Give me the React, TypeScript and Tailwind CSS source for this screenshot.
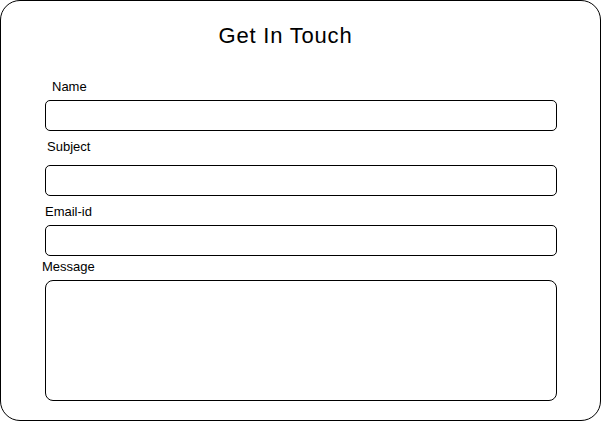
import React from "react";

export default function App() {
  const font = { fontFamily: '"Liberation Sans", Arial, Helvetica, sans-serif' };
  return (
    <div className="w-[601px] h-[421px] bg-white" style={font}>
      <div className="w-[601px] h-[421px] border border-black rounded-[20px] box-border flex flex-col pt-[23px] text-black">
        <div className="w-[569px] text-center text-[22px] leading-[24px] h-[24px] tracking-[0.8px]">Get In Touch</div>
        <div className="ml-[51px] mt-[31px] text-[13px] leading-[15px] h-[15px]">Name</div>
        <div className="ml-[44px] mt-[6px] w-[512px] h-[31px] border border-black rounded-[5px] box-border" />
        <div className="ml-[46px] mt-[8px] text-[13px] leading-[15px] h-[15px]">Subject</div>
        <div className="ml-[44px] mt-[11px] w-[512px] h-[31px] border border-black rounded-[5px] box-border" />
        <div className="ml-[44px] mt-[8px] text-[13px] leading-[15px] h-[15px]">Email-id</div>
        <div className="ml-[44px] mt-[6px] w-[512px] h-[31px] border border-black rounded-[5px] box-border" />
        <div className="ml-[41px] mt-[3px] text-[13px] leading-[15px] h-[15px]">Message</div>
        <div className="ml-[44px] mt-[6px] w-[512px] h-[121px] border border-black rounded-[8px] box-border" />
      </div>
    </div>
  );
}
